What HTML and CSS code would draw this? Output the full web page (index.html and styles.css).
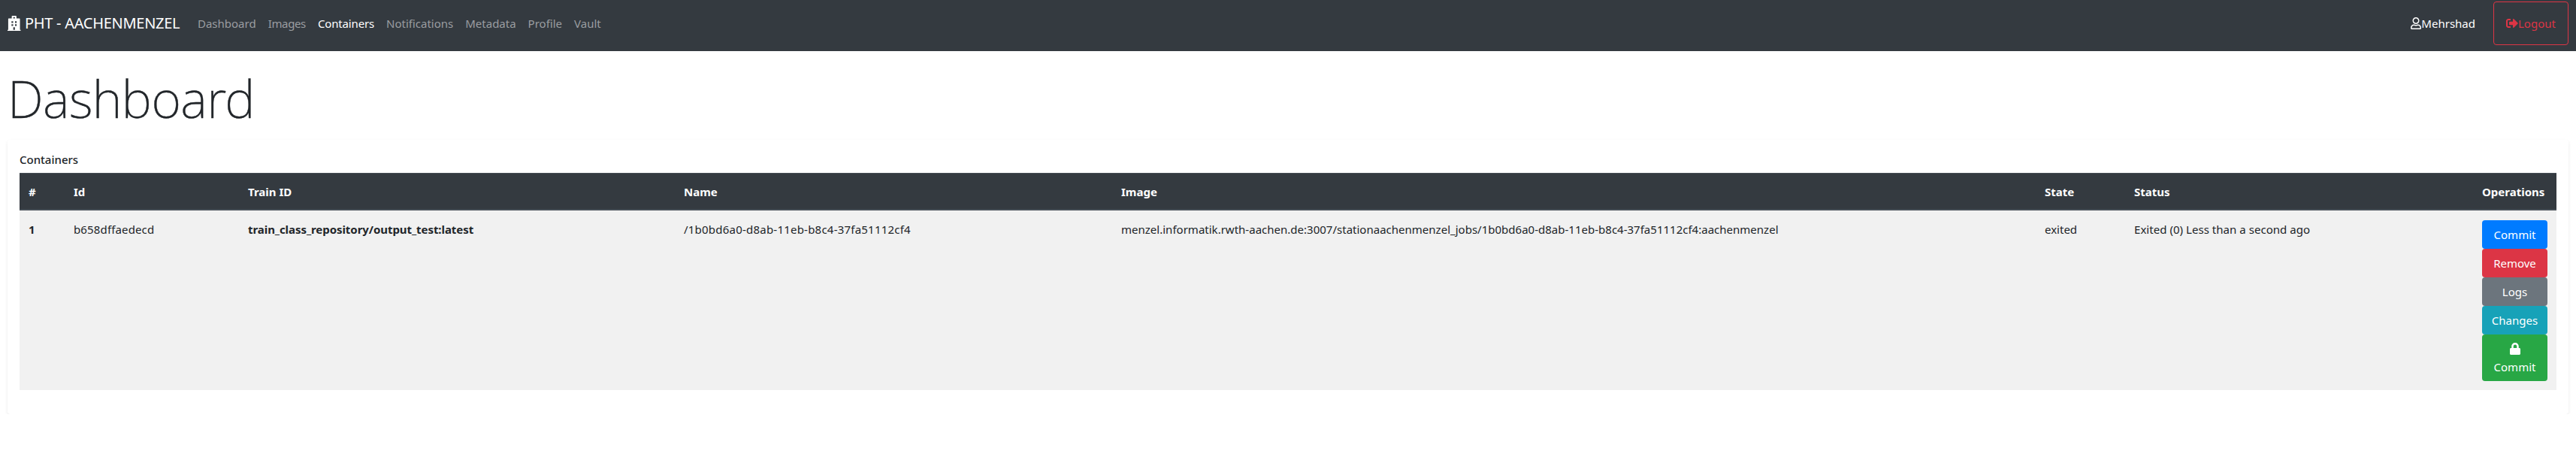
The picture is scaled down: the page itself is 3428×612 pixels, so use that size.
FILE: index.html
```
<!DOCTYPE html>
<html lang="en">
<head>
<meta charset="utf-8">
<title>PHT - AACHENMENZEL</title>
<link rel="stylesheet" href="styles.css">
</head>
<body>
<nav class="navbar">
  <a class="brand"><svg class="brand-icon" viewBox="0 0 448 512" fill-rule="evenodd"><path d="M448 480v32H0v-32h24V112c0-13 11-24 24-24h96V24c0-13 11-24 24-24h112c13 0 24 11 24 24v64h96c13 0 24 11 24 24v368zM196 44v48h56v-48zM136 188v56h56v-56zM256 188v56h56v-56zM136 288v56h56v-56zM256 288v56h56v-56zM196 388v92h56v-92z"/></svg><span>PHT - AACHENMENZEL</span></a>
  <ul class="menu">
    <li>Dashboard</li>
    <li class="images">Images</li>
    <li class="active">Containers</li>
    <li>Notifications</li>
    <li>Metadata</li>
    <li>Profile</li>
    <li>Vault</li>
  </ul>
  <a class="user"><svg class="user-icon" viewBox="0 0 448 512"><path d="M313.6 304c-28.700 0-42.500 16-89.600 16-47.100 0-60.800-16-89.600-16C60.200 304 0 364.200 0 438.400V464c0 26.500 21.500 48 48 48h352c26.500 0 48-21.500 48-48v-25.600c0-74.200-60.200-134.400-134.400-134.400zM400 464H48v-25.600c0-47.600 38.800-86.400 86.400-86.400 14.600 0 38.300 16 89.600 16 51.700 0 74.900-16 89.600-16 47.600 0 86.400 38.800 86.400 86.400V464zM224 288c79.500 0 144-64.500 144-144S303.500 0 224 0 80 64.500 80 144s64.500 144 144 144zm0-240c52.900 0 96 43.100 96 96s-43.100 96-96 96-96-43.100-96-96 43.100-96 96-96z"/></svg>Mehrshad</a>
  <a class="logout"><svg class="logout-icon" viewBox="0 0 512 512"><path d="M497 273L329 441c-15 15-41 4.500-41-17v-96H152c-13.300 0-24-10.700-24-24v-96c0-13.300 10.700-24 24-24h136V88c0-21.400 25.900-32 41-17l168 168c9.300 9.400 9.300 24.600 0 34zM192 436v-40c0-6.600-5.400-12-12-12H96c-17.700 0-32-14.300-32-32V160c0-17.700 14.300-32 32-32h84c6.600 0 12-5.400 12-12V76c0-6.600-5.400-12-12-12H96c-53 0-96 43-96 96v192c0 53 43 96 96 96h84c6.600 0 12-5.400 12-12z"/></svg>Logout</a>
</nav>
<main>
  <h1>Dashboard</h1>
  <section class="card">
    <h2>Containers</h2>
    <table>
      <colgroup><col class="c-num"><col class="c-id"><col class="c-train"><col class="c-name"><col class="c-image"><col class="c-state"><col class="c-status"><col></colgroup>
      <thead>
        <tr><th>#</th><th>Id</th><th>Train ID</th><th>Name</th><th>Image</th><th>State</th><th>Status</th><th>Operations</th></tr>
      </thead>
      <tbody>
        <tr>
          <th>1</th>
          <td class="id">b658dffaedecd</td>
          <th class="train">train_class_repository/output_test:latest</th>
          <td class="name">/1b0bd6a0-d8ab-11eb-b8c4-37fa51112cf4</td>
          <td class="image">menzel.informatik.rwth-aachen.de:3007/stationaachenmenzel_jobs/1b0bd6a0-d8ab-11eb-b8c4-37fa51112cf4:aachenmenzel</td>
          <td>exited</td>
          <td class="status">Exited (0) Less than a second ago</td>
          <td>
            <div class="ops">
              <button class="btn primary">Commit</button>
              <button class="btn danger">Remove</button>
              <button class="btn secondary">Logs</button>
              <button class="btn info">Changes</button>
              <button class="btn success"><svg class="lock-icon" viewBox="0 0 448 512"><path d="M400 224h-24v-72C376 68.200 307.800 0 224 0S72 68.200 72 152v72H48c-26.500 0-48 21.500-48 48v192c0 26.500 21.500 48 48 48h352c26.500 0 48-21.500 48-48V272c0-26.500-21.500-48-48-48zm-104 0H152v-72c0-39.700 32.300-72 72-72s72 32.300 72 72v72z"/></svg>Commit</button>
            </div>
          </td>
        </tr>
      </tbody>
    </table>
  </section>
</main>
</body>
</html>
```
FILE: styles.css
```
* { box-sizing: border-box; }
body {
  margin: 0;
  background: #fff;
  color: #212529;
  font: 15px/24px "Noto Sans", "Open Sans", sans-serif;
}
svg { display: block; flex: none; fill: currentColor; }

.navbar {
  display: flex;
  align-items: flex-start;
  height: 68px;
  padding: 2px 10px 0;
  background: #343a40;
  color: #fff;
}
.brand {
  display: flex;
  width: 253px;
  padding-top: 14px;
  font-size: 20px;
  line-height: 30px;
  letter-spacing: -0.28px;
  white-space: nowrap;
}
.brand-icon { width: 17.5px; height: 20px; margin: 5px 5.5px 0 0; }
.menu {
  display: flex;
  gap: 16px;
  margin: 0;
  padding: 17px 0 0;
  list-style: none;
  color: #9a9da0;
}
.menu .images { letter-spacing: -0.35px; }
.menu .active { color: #fff; letter-spacing: -0.16px; }
.user { display: flex; margin-left: auto; padding-top: 17px; }
.user-icon { width: 14px; height: 16px; margin-top: 4px; }
.logout {
  display: flex;
  width: 100px;
  height: 58px;
  margin-left: 24px;
  padding: 16px 0 0 16px;
  border: 1px solid #dc3545;
  border-radius: 4px;
  color: #dc3545;
}
.logout-icon { width: 16px; height: 16px; margin-top: 4px; }

main { padding: 20px 10px 0; }
h1 {
  margin: 0 0 12px;
  font-size: 68px;
  font-weight: 200;
  line-height: 86px;
  letter-spacing: -0.55px;
  -webkit-text-stroke: .4px currentColor;
}
.card {
  height: 365px;
  padding: 14px 16px 0;
  border-radius: 4px;
  box-shadow: 0 2px 4px rgba(0, 0, 0, .085);
}
h2 {
  margin: 0 0 6px;
  font-size: 15px;
  font-weight: 500;
  line-height: 24px;
}
table {
  width: 100%;
  table-layout: fixed;
  border-collapse: separate;
  border-spacing: 0;
}
.c-num { width: 60px; }
.c-id { width: 232px; }
.c-train { width: 580px; }
.c-name { width: 582px; }
.c-image { width: 1229px; }
.c-state { width: 119px; }
.c-status { width: 463px; }
th, td {
  padding: 13px 12px 12px;
  text-align: left;
  vertical-align: top;
  white-space: nowrap;
}
th { font-weight: 700; }
thead th {
  padding: 12px 12px 11px;
  border-top: 1px solid #454d55;
  border-bottom: 2px solid #454d55;
  background: #343a40;
  color: #fff;
}
tbody tr { background: #f1f1f1; }
.id { letter-spacing: .14px; }
.train { letter-spacing: -.06px; }
.name { letter-spacing: .22px; }
.image { letter-spacing: .01px; }
.status { letter-spacing: .04px; }
.ops { display: flex; flex-direction: column; width: 87px; }
.btn {
  height: 38px;
  padding: 7px 0;
  border: 0;
  border-radius: 4px;
  color: #fff;
  font: inherit;
  text-align: center;
}
.primary { background: #007bff; }
.danger { background: #dc3545; }
.secondary { background: #6c757d; }
.info { background: #17a2b8; }
.success { height: 62px; background: #28a745; }
.lock-icon { width: 14px; height: 16px; margin: 4px auto; }
```
